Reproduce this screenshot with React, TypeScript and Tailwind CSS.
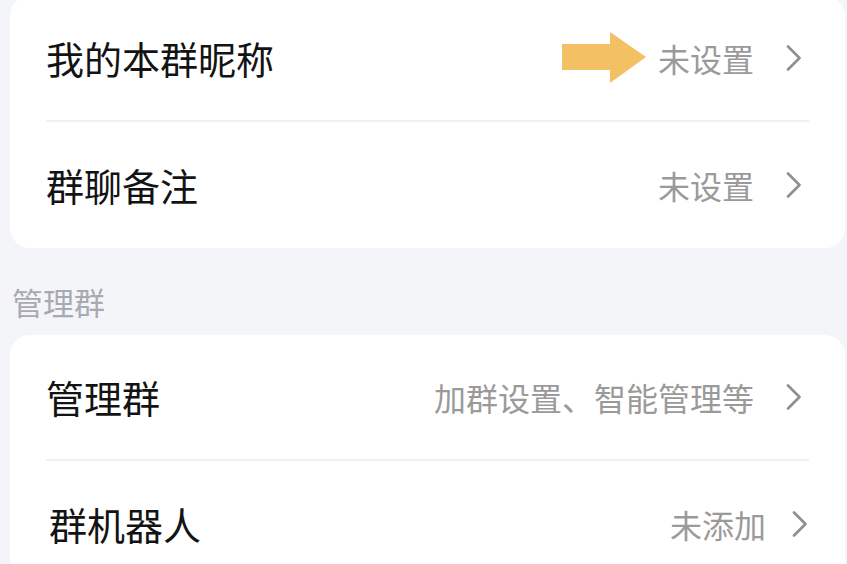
import React from "react";

const font = { fontFamily: '"Noto Sans CJK SC", "Noto Sans", sans-serif' };

function Chevron({ shifted }: { shifted?: boolean }) {
  return (
    <svg width="16" height="26" viewBox="0 0 16 26" className={`shrink-0 ${shifted ? "ml-[26px] mr-[1px]" : "ml-[32px] mr-[7px]"}`}>
      <path d="M2 1.5 L13.5 13 L2 24.5" fill="none" stroke="#8f8f8f" strokeWidth="2.6" strokeLinecap="round" strokeLinejoin="round" />
    </svg>
  );
}

function Arrow() {
  return (
    <svg width="84" height="52" viewBox="0 0 84 52" className="absolute right-full mr-[12px] top-1/2 -translate-y-1/2">
      <path d="M0 12 H48 V0 L84 25 L48 51 V38 H0 Z" fill="#f3c164" />
    </svg>
  );
}

function Row({ label, value, arrow, last, shifted }: { label: string; value: string; arrow?: boolean; last?: boolean; shifted?: boolean }) {
  return (
    <div className={`h-[126px] flex items-center ${last ? "" : "border-b-2 border-[#f1f1f3]"}`}>
      <span className={`text-[38px] text-[#131313] leading-none ${shifted ? "pl-[3px]" : ""}`}>{label}</span>
      <div className="flex-1" />
      <div className="relative flex items-center">
        {arrow && <Arrow />}
        <span className="text-[32px] text-[#9a9a9a] leading-none">{value}</span>
      </div>
      <Chevron shifted={shifted} />
    </div>
  );
}

export default function App() {
  return (
    <div className="w-[847px] h-[564px] overflow-hidden bg-[#f4f5f9] pl-[10px] pr-[2px]" style={font}>
      <div className="bg-white rounded-[20px] mt-[-4px] px-[36px]">
        <Row label="我的本群昵称" value="未设置" arrow />
        <Row label="群聊备注" value="未设置" last />
      </div>
      <div className="h-[87px] flex items-center pl-[2px] pt-[20px]">
        <span className="text-[31px] text-[#a9aab1] leading-none">管理群</span>
      </div>
      <div className="bg-white rounded-[20px] px-[36px]">
        <Row label="管理群" value="加群设置、智能管理等" />
        <Row label="群机器人" value="未添加" last shifted />
      </div>
    </div>
  );
}
